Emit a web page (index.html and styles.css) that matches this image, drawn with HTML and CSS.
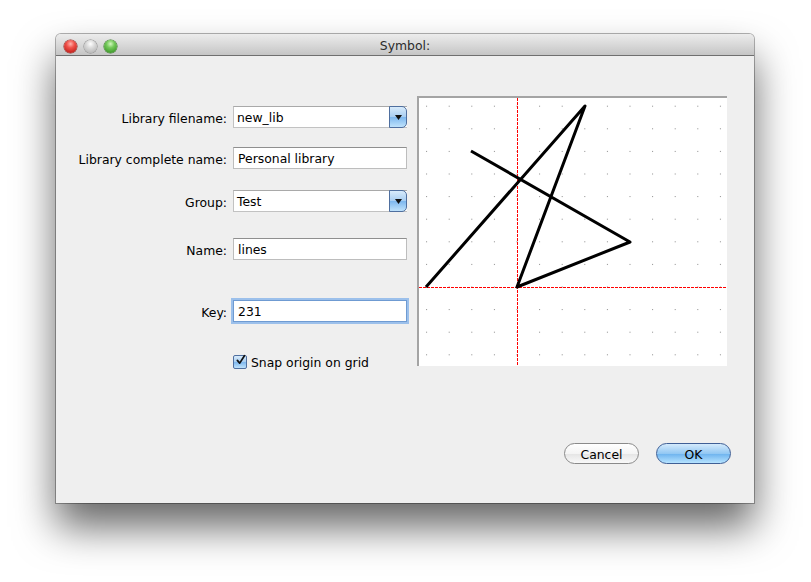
FILE: index.html
```html
<!DOCTYPE html>
<html>
<head>
<meta charset="utf-8">
<link rel="stylesheet" href="styles.css">
</head>
<body>
<div class="screen">
  <div class="window">
    <div class="titlebar">
      <div class="lights">
        <span class="light red"></span>
        <span class="light grey"></span>
        <span class="light green"></span>
      </div>
      <div class="title">Symbol:</div>
      <div></div>
    </div>
    <div class="content">
      <div class="main">
        <div class="form">
          <div class="row r1">
            <span class="lbl">Library filename:</span>
            <div class="combo"><span class="combo-text">new_lib</span><span class="combo-btn"><svg width="7" height="5" viewBox="0 0 7 5"><path d="M0 0H7L3.5 5Z" fill="#111"/></svg></span></div>
          </div>
          <div class="row r2">
            <span class="lbl">Library complete name:</span>
            <div class="field">Personal library</div>
          </div>
          <div class="row r3">
            <span class="lbl">Group:</span>
            <div class="combo"><span class="combo-text">Test</span><span class="combo-btn"><svg width="7" height="5" viewBox="0 0 7 5"><path d="M0 0H7L3.5 5Z" fill="#111"/></svg></span></div>
          </div>
          <div class="row r4">
            <span class="lbl">Name:</span>
            <div class="field">lines</div>
          </div>
          <div class="row r5">
            <span class="lbl">Key:</span>
            <div class="field focused">231</div>
          </div>
          <div class="check-row">
            <span class="checkbox"><svg width="14" height="14" viewBox="0 0 14 14"><path d="M3 7.5L6 11L12 1.5" fill="none" stroke="#111" stroke-width="2.2" stroke-linecap="round" stroke-linejoin="round"/></svg></span>
            <span class="check-label">Snap origin on grid</span>
          </div>
        </div>
        <div class="canvas">
          <svg width="308" height="268" viewBox="419 99 308 268">
            <defs>
              <pattern id="dots" x="516.5" y="287.5" width="22.6" height="22.6" patternUnits="userSpaceOnUse">
                <rect x="0" y="0" width="1" height="1" fill="#8a8a8a"/>
              </pattern>
              <pattern id="vdash" x="0" y="99" width="1" height="4" patternUnits="userSpaceOnUse">
                <rect x="0" y="0" width="1" height="3" fill="rgb(255,0,0)"/>
              </pattern>
              <pattern id="hdash" x="419" y="0" width="4" height="1" patternUnits="userSpaceOnUse">
                <rect x="0" y="0" width="3" height="1" fill="rgb(255,0,0)"/>
              </pattern>
            </defs>
            <rect x="419" y="99" width="308" height="268" fill="url(#dots)"/>
            <rect x="517" y="99" width="1" height="268" fill="url(#vdash)"/>
            <rect x="419" y="288" width="308" height="1" fill="url(#hdash)"/>
            <polyline points="426,288 585,107 517,288 630,243 471,152" fill="none" stroke="#000" stroke-width="3" stroke-linejoin="round" stroke-linecap="butt"/>
          </svg>
        </div>
      </div>
      <div class="buttons">
        <button class="btn">Cancel</button>
        <button class="btn primary">OK</button>
      </div>
    </div>
  </div>
</div>
</body>
</html>
```

FILE: styles.css
```css
* { box-sizing: border-box; }
html, body { margin: 0; padding: 0; background: #fff; }
body {
  font-family: "DejaVu Sans", "Liberation Sans", sans-serif;
  font-size: 12.4px;
  color: #000;
}
.screen {
  width: 811px;
  height: 582px;
  padding: 34px 0 0 56px;
}
.window {
  width: 698px;
  height: 469px;
  background: #efefef;
  border-radius: 5px 5px 0 0;
  box-shadow: 0 0 0 1px rgba(0,0,0,0.3), 0 24px 40px rgba(0,0,0,0.6);
  display: flex;
  flex-direction: column;
}
.titlebar {
  height: 22px;
  display: grid;
  grid-template-columns: 1fr auto 1fr;
  align-items: center;
  background: linear-gradient(#ececec, #d9d9d9 50%, #c5c5c5);
  border-bottom: 1px solid #6f6f6f;
  border-radius: 5px 5px 0 0;
}
.lights {
  display: flex;
  gap: 7px;
  padding-left: 8px;
  padding-top: 3px;
}
.light {
  width: 13px;
  height: 13px;
  border-radius: 50%;
  display: block;
}
.light.red {
  background: radial-gradient(circle at 50% 30%, #ffb3ad 0, #f0524b 35%, #c4221d 80%, #a31813 100%);
  box-shadow: 0 0 0 0.5px #8f2a25;
}
.light.grey {
  background: radial-gradient(circle at 50% 30%, #ffffff 0, #dcdcdc 35%, #b9b9b9 80%, #9f9f9f 100%);
  box-shadow: 0 0 0 0.5px #8b8b8b;
}
.light.green {
  background: radial-gradient(circle at 50% 30%, #d3f7bf 0, #74c95a 35%, #3f9a2b 80%, #2d7a1e 100%);
  box-shadow: 0 0 0 0.5px #3c7a2c;
}
.title {
  font-size: 12.4px;
  color: #2c2c2c;
  padding-top: 2px;
}
.content {
  flex: 1;
  display: flex;
  flex-direction: column;
  padding-top: 40px;
}
.main {
  display: flex;
  align-items: flex-start;
  height: 272px;
}
.form {
  width: 351px;
  display: flex;
  flex-direction: column;
}
.row {
  display: grid;
  grid-template-columns: 171px 174px;
  column-gap: 6px;
  align-items: center;
}
.r1 { margin-top: 10px; }
.r2 { margin-top: 19px; }
.r3 { margin-top: 21px; }
.r4 { margin-top: 26px; }
.r5 { margin-top: 40px; }
.lbl {
  text-align: right;
  white-space: nowrap;
  padding-top: 2px;
}
.field {
  height: 22px;
  background: #fff;
  border: 1px solid #bdbdbd;
  border-top-color: #8f8f8f;
  padding: 1px 4px 0;
  line-height: 20px;
}
.field.focused {
  border-color: #6f9bd2;
  box-shadow: 0 0 0 2px #9cc0eb;
}
.combo {
  height: 22px;
  display: flex;
  background: #fff;
  border: 1px solid #c2c2c2;
  border-top-color: #a9a9a9;
  border-right: none;
}
.combo-text {
  flex: 1;
  padding: 1px 3px 0;
  line-height: 20px;
}
.combo-btn {
  width: 18px;
  margin: -1px 0;
  height: 22px;
  border: 1px solid #4f6f9f;
  border-radius: 0 5px 5px 0;
  background: linear-gradient(#d8ebfb, #a7cdf1 50%, #7db7ee 51%, #bfe2fb);
  display: flex;
  align-items: center;
  justify-content: center;
}
.check-row {
  margin-top: 31px;
  padding-left: 177px;
  display: flex;
  align-items: center;
  gap: 4px;
}
.checkbox {
  width: 14px;
  height: 14px;
  border: 1px solid #4f6f9f;
  border-radius: 2px;
  background: linear-gradient(#d8ebfb, #a7cdf1 50%, #7db7ee 51%, #bfe2fb);
  display: flex;
  align-items: center;
  justify-content: center;
  overflow: visible;
}
.checkbox svg { margin-top: -3px; margin-left: 1px; }
.check-label { white-space: nowrap; padding-top: 2px; }
.canvas {
  margin-left: 10px;
  width: 310px;
  height: 270px;
  background: #fff;
  border-top: 2px solid #a4a4a4;
  border-left: 2px solid #a4a4a4;
}
.canvas svg { display: block; }
.buttons {
  margin-top: 75px;
  display: flex;
  justify-content: flex-end;
  gap: 17px;
  padding-right: 23px;
}
.btn {
  width: 75px;
  height: 21px;
  border-radius: 11px;
  border: 1px solid #8a8a8a;
  background: linear-gradient(#ffffff, #f4f4f4 50%, #e4e4e4 51%, #f9f9f9);
  font-family: "DejaVu Sans", "Liberation Sans", sans-serif;
  font-size: 12.4px;
  color: #000;
  padding: 1px 0 0;
  line-height: 19px;
}
.btn.primary {
  border-color: #3f5f96;
  background: linear-gradient(#d4eafc, #93c8f3 50%, #6cb2ee 51%, #b6e3ff);
}
```
